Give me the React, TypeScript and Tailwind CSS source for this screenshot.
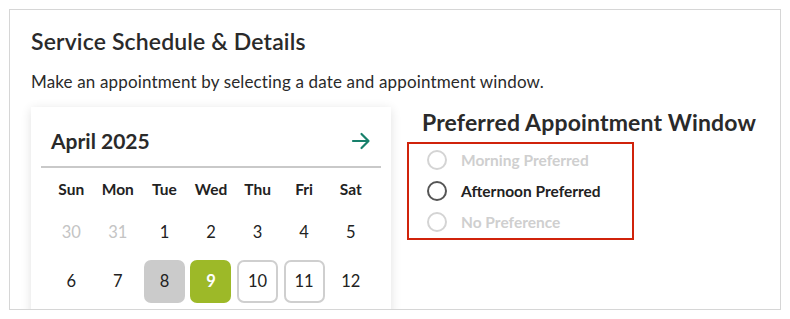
import React from "react";

const days = ["Sun", "Mon", "Tue", "Wed", "Thu", "Fri", "Sat"];

type Cell = { d: number; muted?: boolean; kind?: "today" | "selected" | "open" };

const weeks: Cell[][] = [
  [{ d: 30, muted: true }, { d: 31, muted: true }, { d: 1 }, { d: 2 }, { d: 3 }, { d: 4 }, { d: 5 }],
  [{ d: 6 }, { d: 7 }, { d: 8, kind: "today" }, { d: 9, kind: "selected" }, { d: 10, kind: "open" }, { d: 11, kind: "open" }, { d: 12 }],
];

const options = [
  { label: "Morning Preferred", disabled: true },
  { label: "Afternoon Preferred", disabled: false },
  { label: "No Preference", disabled: true },
];

const cellClass = (c: Cell) => {
  if (c.kind === "today") return "bg-[#cbcbcb] text-[#222]";
  if (c.kind === "selected") return "bg-[#9db928] text-white font-bold";
  if (c.kind === "open") return "border-2 border-[#cfcfcf] text-[#222]";
  if (c.muted) return "text-[#c4c4c4]";
  return "text-[#222]";
};

export default function App() {
  return (
    <div className="bg-white p-[9px] font-['Lato',sans-serif] text-[#2a2a2a]">
      <div className="h-[301px] w-[772px] overflow-hidden border border-[#d6d6d6] px-[21px] pt-[15px]">
        <h1 className="text-[23px] font-semibold leading-[32px] tracking-[0.15px]">
          Service Schedule &amp; Details
        </h1>
        <p className="mt-[14px] text-[17px] leading-[22px] tracking-[0.15px]">
          Make an appointment by selecting a date and appointment window.
        </p>
        <div className="mt-[14px] flex gap-[16px]">
          <div className="w-[360px] shrink-0 bg-white pb-[20px] shadow-[0_2px_10px_rgba(0,0,0,0.12)]">
            <div className="flex items-center justify-between px-[20px] pb-[11px] pt-[20px]">
              <span className="text-[21px] font-bold leading-[28px]">April 2025</span>
              <svg width="20" height="18" viewBox="0 0 20 18" fill="none" stroke="#17806b" strokeWidth="2.2" strokeLinecap="round" strokeLinejoin="round">
                <path d="M2 9h15M10.5 2l7 7-7 7" />
              </svg>
            </div>
            <div className="mx-[10px] h-[2px] bg-[#c9c9c9]" />
            <div className="grid grid-cols-7 px-[17px] pt-[10px]">
              {days.map((d) => (
                <div key={d} className="h-[22px] text-center text-[15.5px] font-bold leading-[22px] text-[#222]">
                  {d}
                </div>
              ))}
            </div>
            <div className="flex flex-col gap-[6px] px-[17px] pt-[11px]">
              {weeks.map((w, i) => (
                <div key={i} className="grid grid-cols-7">
                  {w.map((c) => (
                    <div key={c.d + "_" + i} className="flex justify-center">
                      <div className={`flex h-[43px] w-[41px] items-center justify-center rounded-[7px] text-[16.5px] ${cellClass(c)}`}>
                        {c.d}
                      </div>
                    </div>
                  ))}
                </div>
              ))}
            </div>
          </div>
          <div className="pl-[15px] pt-[1px]">
            <h2 className="whitespace-nowrap text-[23px] font-bold leading-[28px] tracking-[0.15px]">Preferred Appointment Window</h2>
            <div className="-ml-[15px] mt-[6px] flex w-[227px] flex-col gap-[11px] border-[2.5px] border-[#d0230b] py-[6px] pl-[18px]">
              {options.map((o) => (
                <label key={o.label} className="flex items-center gap-[14px]">
                  <span
                    className={`h-[20px] w-[20px] rounded-full border-2 ${o.disabled ? "border-[#d4d4d4]" : "border-[#555]"}`}
                  />
                  <span className={`text-[15.5px] font-bold leading-[20px] ${o.disabled ? "text-[#cfcfcf]" : "text-[#222]"}`}>
                    {o.label}
                  </span>
                </label>
              ))}
            </div>
          </div>
        </div>
      </div>
    </div>
  );
}
